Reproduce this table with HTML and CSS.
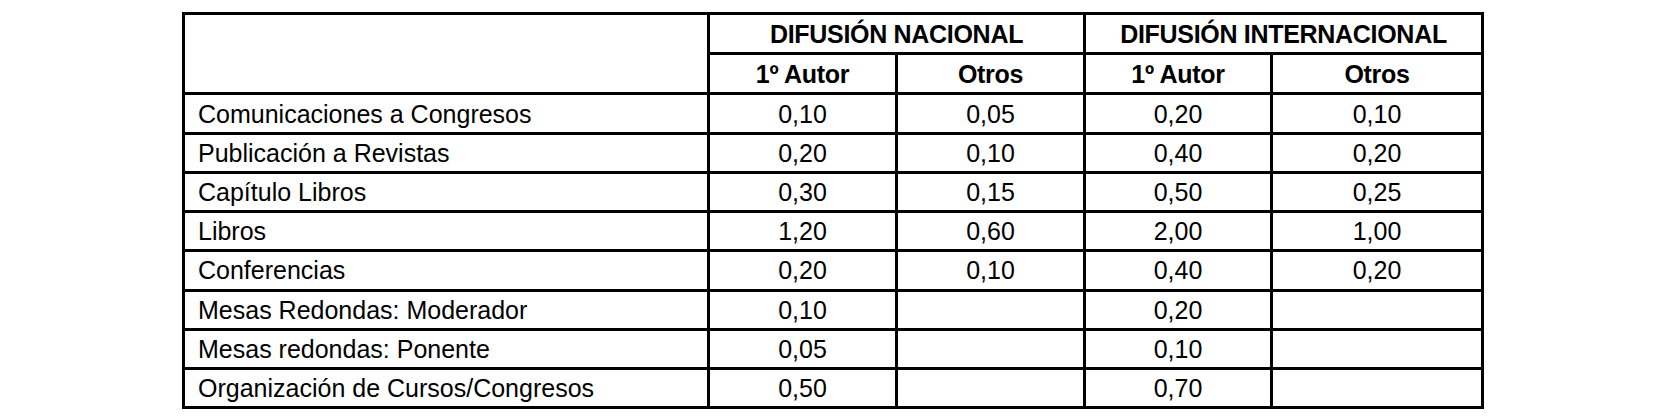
FILE: index.html
```html
<!DOCTYPE html>
<html lang="es">
<head>
<meta charset="utf-8">
<title>Baremo</title>
<link rel="stylesheet" href="styles.css">
</head>
<body>
<div class="tbl">
  <div class="c corner"></div>
  <div class="c h span2">DIFUSIÓN NACIONAL</div>
  <div class="c h span2">DIFUSIÓN INTERNACIONAL</div>
  <div class="c h">1º Autor</div>
  <div class="c h">Otros</div>
  <div class="c h">1º Autor</div>
  <div class="c h">Otros</div>

  <div class="c lbl">Comunicaciones a Congresos</div><div class="c n">0,10</div><div class="c n">0,05</div><div class="c n">0,20</div><div class="c n">0,10</div>
  <div class="c lbl">Publicación a Revistas</div><div class="c n">0,20</div><div class="c n">0,10</div><div class="c n">0,40</div><div class="c n">0,20</div>
  <div class="c lbl">Capítulo Libros</div><div class="c n">0,30</div><div class="c n">0,15</div><div class="c n">0,50</div><div class="c n">0,25</div>
  <div class="c lbl">Libros</div><div class="c n">1,20</div><div class="c n">0,60</div><div class="c n">2,00</div><div class="c n">1,00</div>
  <div class="c lbl">Conferencias</div><div class="c n">0,20</div><div class="c n">0,10</div><div class="c n">0,40</div><div class="c n">0,20</div>
  <div class="c lbl">Mesas Redondas: Moderador</div><div class="c n">0,10</div><div class="c n"></div><div class="c n">0,20</div><div class="c n"></div>
  <div class="c lbl">Mesas redondas: Ponente</div><div class="c n">0,05</div><div class="c n"></div><div class="c n">0,10</div><div class="c n"></div>
  <div class="c lbl">Organización de Cursos/Congresos</div><div class="c n">0,50</div><div class="c n"></div><div class="c n">0,70</div><div class="c n"></div>
</div>
</body>
</html>
```

FILE: styles.css
```css
html, body {
  margin: 0;
  padding: 0;
  background: #fff;
}
body {
  padding: 12px 0 0 182px;
  font-family: "Liberation Sans", Arial, sans-serif;
  color: #000;
}
.tbl {
  display: grid;
  width: 1302px;
  box-sizing: border-box;
  grid-template-columns: 525px 188px 188px 187px 211px;
  grid-template-rows: 40px 40px 40px repeat(7, 39.15px);
  border-left: 3px solid #000;
  border-top: 3px solid #000;
}
.c {
  box-sizing: border-box;
  border-right: 3px solid #000;
  border-bottom: 3px solid #000;
  display: flex;
  align-items: center;
  font-size: 25px;
  line-height: 1;
  white-space: nowrap;
  padding-top: 1px;
}
.corner {
  grid-row: span 2;
}
.span2 {
  grid-column: span 2;
}
.h {
  justify-content: center;
  font-weight: bold;
  letter-spacing: -0.3px;
}
.n {
  justify-content: center;
}
.lbl {
  padding-left: 13px;
}
```
